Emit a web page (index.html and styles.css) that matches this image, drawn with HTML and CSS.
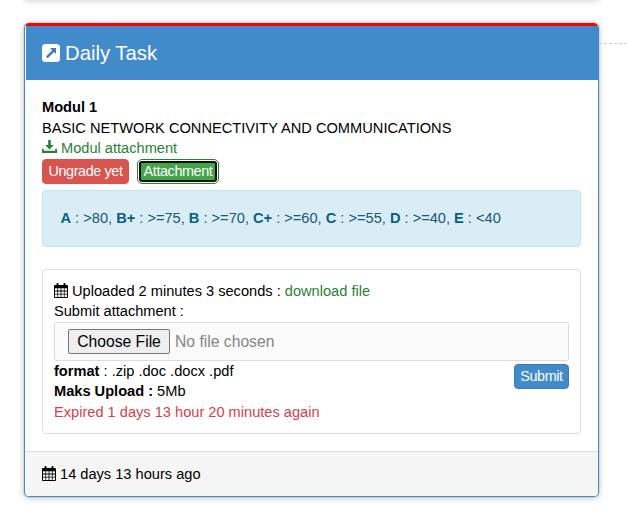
FILE: index.html
```html
<!DOCTYPE html>
<html lang="en">
<head>
<meta charset="utf-8">
<title>Daily Task</title>
<link rel="stylesheet" href="styles.css">
</head>
<body>
<svg class="sprite" aria-hidden="true">
  <symbol id="calendar" viewBox="0 0 14 15">
    <path fill="currentColor" fill-rule="evenodd" d="M1 2h1.5V1q0-1 1-1t1 1v1h5V1q0-1 1-1t1 1v1H13q1 0 1 1v11q0 1-1 1H1q-1 0-1-1V3q0-1 1-1zM1 5.3v2.3h2.4V5.3zM4.1 5.3v2.3h2.5V5.3zM7.4 5.3v2.3h2.5V5.3zM10.6 5.3v2.3H13V5.3zM1 8.4v2.4h2.4V8.4zM4.1 8.4v2.4h2.5V8.4zM7.4 8.4v2.4h2.5V8.4zM10.6 8.4v2.4H13V8.4zM1 11.6V14h2.4v-2.4zM4.1 11.6V14h2.5v-2.4zM7.4 11.6V14h2.5v-2.4zM10.6 11.6V14H13v-2.4z"/>
  </symbol>
</svg>
<div class="previous"></div>
<main class="row">
  <section class="panel">
    <header class="heading">
      <svg class="link-icon" viewBox="0 0 18 18"><rect width="18" height="18" rx="3.5" fill="#fff"/><path d="M8 4h6v6l-2-2-6.3 6.2-1.7-1.7 6.2-6.3z" fill="#357fbd"/></svg>
      <h1>Daily Task</h1>
    </header>
    <div class="body">
      <div class="line"><b>Modul 1</b></div>
      <div class="line title">BASIC NETWORK CONNECTIVITY AND COMMUNICATIONS</div>
      <div class="line green module"><svg class="download" viewBox="0 0 15 14"><path fill="currentColor" d="M6.2 0h2.6v5h3L7.5 9.5 3.2 5h3zM0 8.7h1.8v2h11.4v-2H15V13H0z"/></svg>Modul attachment</div>
      <div class="buttons"><span class="btn danger">Ungrade yet</span><span class="btn success">Attachment</span></div>
      <div class="grades"><b>A</b> : &gt;80, <b>B+</b> : &gt;=75, <b>B</b> : &gt;=70, <b>C+</b> : &gt;=60, <b>C</b> : &gt;=55, <b>D</b> : &gt;=40, <b>E</b> : &lt;40</div>
      <div class="well">
        <div class="line"><svg class="calendar"><use href="#calendar"/></svg>Uploaded 2 minutes 3 seconds : <span class="green">download file</span></div>
        <div class="line">Submit attachment :</div>
        <div class="file"><span class="choose">Choose File</span><span>No file chosen</span></div>
        <div class="details">
          <div>
            <div class="line"><b>format</b> : .zip .doc .docx .pdf</div>
            <div class="line"><b>Maks Upload :</b> 5Mb</div>
            <div class="line red">Expired 1 days 13 hour 20 minutes again</div>
          </div>
          <span class="btn primary">Submit</span>
        </div>
      </div>
    </div>
    <footer class="footer"><svg class="calendar"><use href="#calendar"/></svg>14 days 13 hours ago</footer>
  </section>
  <div class="connector"></div>
</main>
</body>
</html>
```
FILE: styles.css
```css
* { box-sizing: border-box; }
body {
  margin: 0;
  height: 506px;
  overflow: hidden;
  background: #fff;
  color: #000;
  font: 14.62px/20.6px "Liberation Sans", Arial, sans-serif;
}
.sprite { display: none; }
.previous {
  width: 575px;
  height: 10px;
  margin: -10px 0 23px 24px;
  border-radius: 4px;
  box-shadow: 0 1px 6px rgba(0, 0, 0, .175);
}
.row { display: flex; padding-left: 24px; }
.panel {
  width: 575px;
  height: 474px;
  border: 1px solid #428bca;
  border-radius: 5px;
  border-top: 0;
  overflow: hidden;
  box-shadow: 0 1px 6px rgba(0, 0, 0, .25), 0 0 1px #777;
}
.connector { flex: 1; height: 21px; border-bottom: 1px dashed #ccc; }
.heading {
  display: flex;
  align-items: center;
  height: 57px;
  padding-left: 17px;
  border-top: 3px solid #f00;
  color: #fff;
  background: linear-gradient(90deg, #fff 1px, #428bca 1px);
}
.heading h1 { margin: 0 0 0 5px; font-size: 20.3px; font-weight: 400; line-height: 24px; }
.link-icon { width: 18px; height: 18px; }
.body { height: 371px; padding: 17px 17px 0; }
.line { height: 20.6px; white-space: nowrap; }
.title { letter-spacing: .02px; }
.module { line-height: 21.4px; }
.green { color: #2b7f35; }
.red { color: #d5414b; }
.download { width: 15px; height: 14px; margin-right: 4px; vertical-align: -1px; }
.calendar { width: 14px; height: 15px; margin-right: 4px; vertical-align: -2px; }
.buttons { display: flex; height: 25px; gap: 8px; }
.btn {
  height: 25px;
  padding: 1px 0;
  border: 1px solid;
  border-radius: 4px;
  color: #fff;
  font-size: 14.4px;
  letter-spacing: -.4px;
  line-height: 21px;
  text-align: center;
  white-space: nowrap;
}
.danger { width: 87px; background: #d9534f; border-color: #d9534f; }
.success {
  width: 76px;
  height: 19px;
  margin: 3px 0 0 3px;
  padding: 0;
  border: 1px solid #101010;
  border-radius: 2px;
  outline: 1px solid #2b7f35;
  outline-offset: 2px;
  background: #43a347;
  line-height: 17px;
  box-shadow: 0 0 0 1px #101010;
}
.grades {
  height: 57px;
  margin-top: 6px;
  padding: 17px 17.5px;
  border: 1px solid #bce8f1;
  border-radius: 4px;
  background: #d9edf7;
  color: #22556e;
  white-space: nowrap;
}
.grades b { color: #0b5d80; }
.well {
  height: 165px;
  margin-top: 22px;
  padding: 11px;
  border: 1px solid #ddd;
  border-radius: 4px;
}
.file {
  display: flex;
  align-items: center;
  height: 39px;
  padding: 1px 0 0 13px;
  border: 1px solid #ddd;
  border-radius: 2px;
  background: #fbfbfb;
  color: #858585;
  font-size: 15.7px;
}
.choose {
  width: 102px;
  height: 25px;
  margin-right: 5px;
  border: 1px solid #767676;
  border-radius: 2px;
  background: #efefef;
  color: #000;
  font-size: 15.7px;
  line-height: 24px;
  text-align: center;
}
.details { display: flex; justify-content: space-between; }
.details .line { height: 20.4px; line-height: 20.4px; }
.primary { width: 55px; margin-top: 3px; background: #428bca; border-color: #357ebd; line-height: 20px; }
.footer {
  height: 45px;
  margin-left: 1px;
  padding: 12px 16px;
  border-top: 1px solid #ddd;
  background: #f5f5f5;
}
```
